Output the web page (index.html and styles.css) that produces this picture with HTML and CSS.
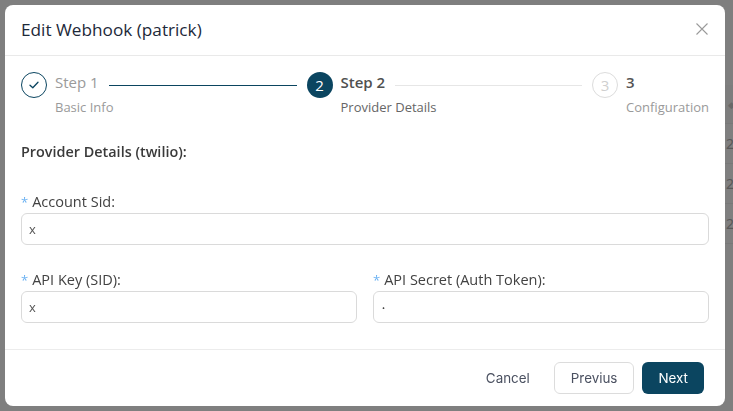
FILE: index.html
```html
<!DOCTYPE html>
<html lang="en">
<head>
<meta charset="utf-8">
<title>Edit Webhook</title>
<link rel="stylesheet" href="styles.css">
</head>
<body>
<div class="page">
  <div class="table">
    <div class="thead"><span class="sorter">&#9670;</span></div>
    <div class="row">22</div>
    <div class="row">22</div>
    <div class="row">22</div>
  </div>
</div>
<div class="mask"></div>
<div class="modal-wrap">
  <div class="modal">
    <div class="modal-header">
      <div class="modal-title">Edit Webhook (patrick)</div>
      <button class="close" aria-label="Close">
        <svg width="12" height="12" viewBox="0 0 12 12"><path d="M0.5 0.5 L11.5 11.5 M11.5 0.5 L0.5 11.5" stroke="#9a9a9a" stroke-width="1.1" fill="none"/></svg>
      </button>
    </div>
    <div class="modal-body">
      <div class="steps">
        <div class="step done">
          <div class="step-icon">
            <svg width="10" height="8" viewBox="0 0 10 8"><path d="M1 4.2 L3.8 6.8 L9 1.2" stroke="#0b4560" stroke-width="1.3" fill="none" stroke-linecap="round" stroke-linejoin="round"/></svg>
          </div>
          <div class="step-body">
            <div class="step-head"><span class="step-title">Step 1</span><span class="step-line"></span></div>
            <div class="step-desc">Basic Info</div>
          </div>
        </div>
        <div class="step active">
          <div class="step-icon">2</div>
          <div class="step-body">
            <div class="step-head"><span class="step-title">Step 2</span><span class="step-line"></span></div>
            <div class="step-desc">Provider Details</div>
          </div>
        </div>
        <div class="step wait last">
          <div class="step-icon">3</div>
          <div class="step-body">
            <div class="step-head"><span class="step-title">3</span></div>
            <div class="step-desc">Configuration</div>
          </div>
        </div>
      </div>

      <div class="section-title">Provider Details (twilio):</div>

      <div class="form-item first">
        <label class="label"><span class="req">*</span>Account Sid:</label>
        <div class="input">x</div>
      </div>

      <div class="form-row">
        <div class="form-item">
          <label class="label"><span class="req">*</span>API Key (SID):</label>
          <div class="input">x</div>
        </div>
        <div class="form-item">
          <label class="label"><span class="req">*</span>API Secret (Auth Token):</label>
          <div class="input"><span class="dot">&#8226;</span></div>
        </div>
      </div>
    </div>
    <div class="modal-footer">
      <button class="btn btn-text">Cancel</button>
      <button class="btn btn-default">Previus</button>
      <button class="btn btn-primary">Next</button>
    </div>
  </div>
</div>
</body>
</html>
```
FILE: styles.css
```css
html, body {
  margin: 0;
  padding: 0;
}
body {
  width: 733px;
  height: 411px;
  overflow: hidden;
  background: #ffffff;
  font-family: "Open Sans", "Noto Sans", sans-serif;
}
.page {
  display: flex;
  padding: 85px 0 0 725px;
}
.table {
  width: 200px;
  font-family: "Noto Sans", sans-serif;
  font-size: 14px;
  color: #b0b0b0;
}
.thead {
  height: 38px;
  background: #fafafa;
  border-bottom: 1px solid #f0f0f0;
  display: flex;
  align-items: center;
  padding-left: 3px;
}
.sorter {
  font-size: 9px;
  color: #d0d0d0;
}
.row {
  height: 39px;
  line-height: 39px;
  border-bottom: 1px solid #f0f0f0;
  padding-left: 1px;
}
.mask {
  position: fixed;
  inset: 0;
  background: rgba(0, 0, 0, 0.5);
}
.modal-wrap {
  position: fixed;
  inset: 0;
  padding: 5px 0 0 5px;
}
.modal {
  width: 720px;
  background: #ffffff;
  border-radius: 8px;
  display: flex;
  flex-direction: column;
}
.modal-header {
  height: 50px;
  border-bottom: 1px solid #e9e9e9;
  display: flex;
  align-items: center;
  justify-content: space-between;
  padding: 0 17px 0 16px;
}
.modal-title {
  font-size: 17.2px;
  color: #1d2939;
  padding-bottom: 2px;
}
.close {
  border: 0;
  background: none;
  padding: 0;
  width: 12px;
  height: 12px;
  display: flex;
  margin-bottom: 3px;
}
.modal-body {
  padding: 16px 16px 26px;
}
.steps {
  display: flex;
}
.step {
  flex: 1 1 0;
  min-width: 0;
  overflow: hidden;
  display: flex;
}
.step + .step {
  padding-left: 10px;
}
.step.last {
  flex: none;
}
.step-icon {
  width: 26px;
  height: 26px;
  flex: none;
  box-sizing: border-box;
  border-radius: 50%;
  margin-right: 8px;
  display: flex;
  align-items: center;
  justify-content: center;
  font-size: 15px;
}
.step-body {
  flex: 1;
  min-width: 0;
}
.step-head {
  display: flex;
  height: 21px;
}
.step-title {
  font-size: 15px;
  line-height: 21px;
  font-weight: 500;
  white-space: nowrap;
}
.step-line {
  flex: 1;
  height: 1px;
  margin: 13px 0 0 10px;
  background: #e6e6e6;
}
.step-desc {
  font-size: 13px;
  line-height: 20px;
  margin-top: 4px;
  white-space: nowrap;
  color: #9a9a9a;
}
.done .step-icon {
  border: 1px solid #0b4560;
}
.done .step-title {
  color: #9a9a9a;
}
.done .step-line {
  background: #0b4560;
}
.active .step-icon {
  background: #0b4560;
  color: #ffffff;
}
.active .step-title {
  color: #505050;
  font-weight: 600;
}
.active .step-desc {
  color: #666666;
}
.wait .step-icon {
  border: 1px solid #dcdcdc;
  color: #cfcfcf;
}
.wait .step-title {
  color: #555555;
  font-weight: 600;
}
.section-title {
  margin-top: 24px;
  font-size: 14.4px;
  line-height: 22px;
  font-weight: 600;
  color: #3a3a3a;
}
.form-item.first {
  margin-top: 28px;
}
.form-row {
  margin-top: 24px;
  display: grid;
  grid-template-columns: 1fr 1fr;
  column-gap: 16px;
}
.label {
  display: block;
  font-size: 14.5px;
  line-height: 22px;
  color: #424242;
}
.req {
  color: #6cb2f2;
  font-size: 13px;
  margin-right: 4px;
}
.input {
  height: 32px;
  box-sizing: border-box;
  border: 1px solid #dadada;
  border-radius: 6px;
  padding: 0 7px;
  display: flex;
  align-items: center;
  font-size: 13px;
  color: #555555;
}
.dot {
  font-size: 8px;
  color: #444;
  padding-left: 1px;
}
.modal-footer {
  border-top: 1px solid #ececec;
  padding: 12px 21px 12px;
  display: flex;
  justify-content: flex-end;
  gap: 8px;
}
.btn {
  height: 32px;
  box-sizing: border-box;
  border-radius: 6px;
  padding: 0 15px;
  font-family: Inter, sans-serif;
  font-size: 13.4px;
  border: 1px solid transparent;
  background: none;
  color: #4a5060;
}
.btn-default {
  border-color: #dcdcdc;
  background: #ffffff;
  padding: 0 16px;
}
.btn-primary {
  background: #0b4560;
  color: #ffffff;
}
```
